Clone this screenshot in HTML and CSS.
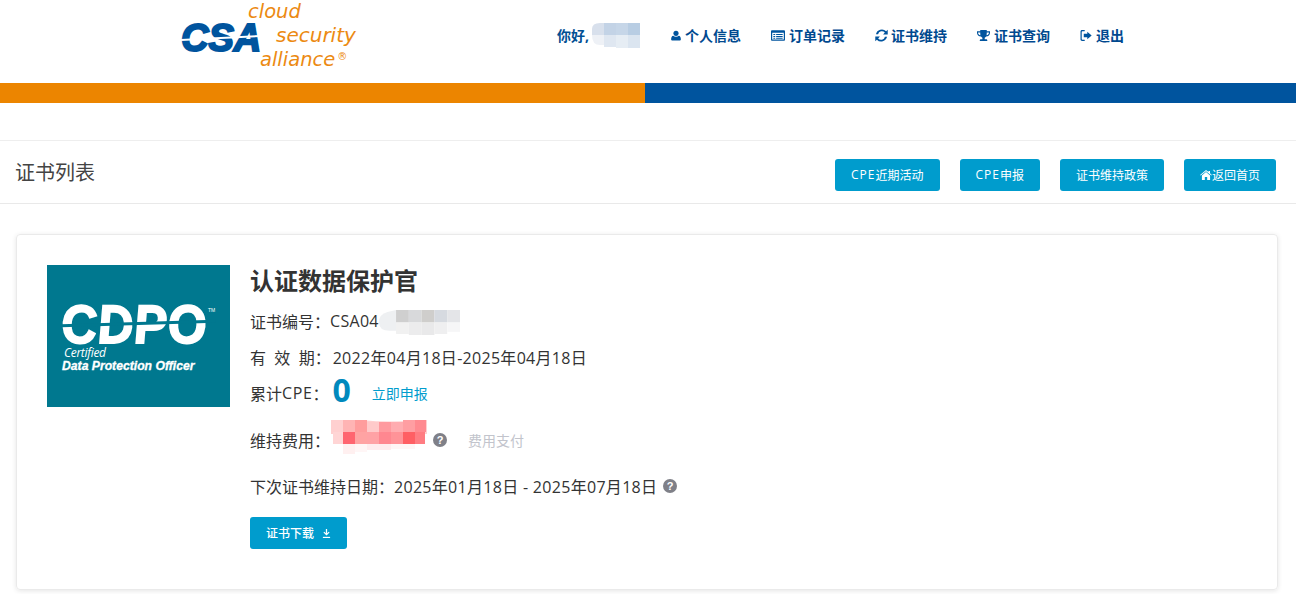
FILE: index.html
```html
<!DOCTYPE html>
<html lang="zh-CN">
<head>
<meta charset="utf-8">
<title>证书列表</title>
<link rel="stylesheet" href="styles.css">
</head>
<body>
<header class="top">
  <a class="logo">
    <span class="logo-csa">CSA<i class="logo-cut"></i></span>
    <span class="logo-w1">cloud</span>
    <span class="logo-w2">security</span>
    <span class="logo-w3">alliance<sup>®</sup></span>
  </a>
  <nav class="nav">
    <span class="hello">你好,
      <svg class="mask-name" width="48" height="25" viewBox="0 0 48 25"><path d="M0 6Q0 0 8 0h4v12H0z" fill="#d8e0ec"/><rect x="12" width="12" height="12" fill="#c3d3e6"/><rect x="24" width="12" height="12" fill="#c6d6e8"/><rect x="36" width="12" height="12" fill="#b8cde3"/><path d="M0 12h12v10H8Q0 22 0 12z" fill="#eef1f6"/><rect x="12" y="12" width="12" height="12" fill="#dfe7f1"/><rect x="24" y="12" width="12" height="13" fill="#e6edf4"/><rect x="36" y="12" width="12" height="13" fill="#dbe5f0"/></svg>
    </span>
    <a class="nav-item"><svg class="ico ico-user" viewBox="0 0 14 14"><circle cx="7" cy="4" r="3.600"/><path d="M1.600 14c-.9 0-1.400-.5-1.400-1.300 0-2.800.8-5.300 3-5.300.900.800 2.200 1.300 3.800 1.300s2.900-.5 3.800-1.300c2.200 0 3 2.500 3 5.300 0 .8-.5 1.300-1.400 1.300z"/></svg>个人信息</a>
    <a class="nav-item"><svg class="ico ico-list" viewBox="0 0 15 13"><path fill-rule="evenodd" d="M1 1h13a1 1 0 0 1 1 1v9a1 1 0 0 1-1 1H1a1 1 0 0 1-1-1V2a1 1 0 0 1 1-1zm.3 2.500v7.200h12.400V3.500zM2.500 5h2v1h-2zm3 0h7v1h-7zM2.500 7h2v1h-2zm3 0h7v1h-7zM2.500 9h2v1h-2zm3 0h7v1h-7z"/></svg>订单记录</a>
    <a class="nav-item"><svg class="ico ico-sync" viewBox="0 0 14 14"><path d="M13.700.8v5H8.700l1.900-1.900A4.200 4.200 0 0 0 3.300 5.600L1 5.600A6.500 6.500 0 0 1 12 2.500zM.3 13.200v-5h5l-1.900 1.900a4.200 4.200 0 0 0 7.300-1.700l2.300 0A6.500 6.500 0 0 1 2 11.500z"/></svg>证书维持</a>
    <a class="nav-item"><svg class="ico ico-cup" viewBox="0 0 14 14"><path fill-rule="evenodd" d="M3.500 1h7v1.500H14v1.700c0 2-1.800 3.700-4.200 3.900-.5.700-1 1.100-1.500 1.400v1.500h1.500c.8 0 1.300.6 1.300 1.300v.7H3v-.7c0-.7.500-1.300 1.300-1.300h1.500V9.500c-.5-.3-1-.7-1.500-1.400C1.800 7.900 0 6.200 0 4.200V2.500h3.500zM1.200 3.700v.5c0 1 .8 2 2.500 2.500-.2-.8-.2-1.800-.2-3zm11.600 0h-2.300c0 1.200 0 2.200-.2 3 1.700-.5 2.500-1.500 2.500-2.500z"/></svg>证书查询</a>
    <a class="nav-item"><svg class="ico ico-exit" viewBox="0 0 14 14"><path d="M5.500 2H2.800C2.200 2 2 2.300 2 2.800v8.400c0 .5.200.8.800.8h2.700v1.400H2.600C1.200 13.400.6 12.700.6 11.400V2.600C.6 1.300 1.200.6 2.600.6h2.900z"/><path d="M8.500 2.600 13.600 7l-5.100 4.400V8.900H4.400V5.100h4.100z"/></svg>退出</a>
  </nav>
</header>

<div class="stripe"><div class="stripe-orange"></div><div class="stripe-blue"></div></div>

<section class="page-head">
  <h1 class="page-title">证书列表</h1>
  <div class="head-actions">
    <a class="btn"><span class="lat">CPE</span>近期活动</a>
    <a class="btn"><span class="lat">CPE</span>申报</a>
    <a class="btn">证书维持政策</a>
    <a class="btn"><svg class="home" viewBox="0 0 13 11"><path d="M6.500 0 9.300 2.300V1h1.600v2.600L13 5.400l-.6.700-5.900-4.800L.6 6.100 0 5.400z"/><path d="M6.500 2.300 11 6v5H7.800V7.800H5.200V11H2V6z"/></svg>返回首页</a>
  </div>
</section>

<main class="card">
  <div class="cert-img">
    <div class="cert-logo">CDPO<i class="cert-cut"></i></div>
    <span class="cert-tm">TM</span>
    <div class="cert-sub">Certified</div>
    <div class="cert-name">Data Protection Officer</div>
  </div>
  <div class="cert-info">
    <h2 class="cert-title">认证数据保护官</h2>
    <div class="row row-1">证书编号：<span class="val">CSA04</span><svg class="mask-no" width="81" height="25" viewBox="0 0 76 24" preserveAspectRatio="none"><path d="M0 12Q0 4 8 2L16 0v20H10Q0 20 0 12z" fill="#eef0f2"/><rect x="16" y="0" width="12" height="12" fill="#cfcfcf"/><rect x="28" y="0" width="12" height="12" fill="#d8d9db"/><rect x="40" y="0" width="12" height="12" fill="#cfcecc"/><rect x="52" y="0" width="12" height="12" fill="#d6dae0"/><rect x="64" y="0" width="12" height="12" fill="#e4e5e8"/><rect x="16" y="12" width="12" height="11" fill="#f1f1f1"/><rect x="28" y="12" width="12" height="12" fill="#ececed"/><rect x="40" y="12" width="12" height="12" fill="#e9e9ea"/><rect x="52" y="12" width="12" height="11" fill="#efeff0"/><rect x="64" y="12" width="12" height="9" fill="#f6f6f7"/></svg></div>
    <div class="row">有&nbsp;&nbsp;效&nbsp;&nbsp;期：<span class="val val-term">2022年04月18日-2025年04月18日</span></div>
    <div class="row">累计<span class="lat-16">CPE</span>：<strong class="cpe-num">0</strong><a class="link-apply">立即申报</a></div>
    <div class="row row-fee">维持费用：<svg class="mask-fee" width="98" height="36" viewBox="0 0 98 36"><path d="M0 0h30c20 2 40 2 60 0h6v14H0z" fill="#ffd0d0"/><rect x="12" y="0" width="12" height="12" fill="#ffb4b4"/><rect x="24" y="0" width="12" height="12" fill="#ff9d9d"/><rect x="36" y="2" width="12" height="10" fill="#ffcaca"/><rect x="48" y="2" width="12" height="10" fill="#ff9a9f"/><rect x="60" y="2" width="12" height="10" fill="#ffacb0"/><rect x="72" y="0" width="12" height="12" fill="#ff9ea2"/><rect x="84" y="0" width="11" height="12" fill="#ff8a90"/><rect x="2" y="12" width="10" height="12" fill="#ffd5d5"/><rect x="12" y="12" width="12" height="12" fill="#ff6570"/><rect x="24" y="12" width="12" height="12" fill="#ffa3a3"/><rect x="36" y="12" width="12" height="12" fill="#ffa2a5"/><rect x="48" y="12" width="12" height="12" fill="#ff8790"/><rect x="60" y="12" width="12" height="12" fill="#ff9398"/><rect x="72" y="12" width="12" height="12" fill="#ff5f64"/><rect x="84" y="12" width="10" height="12" fill="#ff7c82"/><rect x="12" y="24" width="12" height="10" fill="#fff0f0"/><rect x="24" y="24" width="12" height="8" fill="#fff6f6"/><rect x="36" y="24" width="24" height="6" fill="#ffecee"/><rect x="60" y="24" width="24" height="5" fill="#fff6f6"/></svg><svg class="help" viewBox="0 0 14 14"><circle cx="7" cy="7" r="7"/><text class="help-q" x="7" y="10.800" text-anchor="middle">?</text></svg><a class="link-pay">费用支付</a></div>
    <div class="row row-next">下次证书维持日期：<span class="val">2025年01月18日&nbsp;-&nbsp;2025年07月18日</span><svg class="help help-next" viewBox="0 0 14 14"><circle cx="7" cy="7" r="7"/><text class="help-q" x="7" y="10.800" text-anchor="middle">?</text></svg></div>
    <a class="btn btn-dl">证书下载<svg class="dl" viewBox="0 0 10 10"><path d="M4.300 0h1.400v4.700L7.500 3l.9.900L5 7.200 1.600 3.900l.9-.9 1.800 1.700z"/><path d="M1 8.700h8V10H1z"/></svg></a>
  </div>
</main>
</body>
</html>
```
FILE: styles.css
```css
* { box-sizing: border-box; }
html, body { margin: 0; padding: 0; }
body {
  height: 594px;
  overflow: hidden;
  background: #fff;
  color: #333;
  font-family: "Open Sans", "Noto Sans CJK SC", sans-serif;
  font-size: 16px;
}
a { text-decoration: none; }

/* header */
.top { display: flex; align-items: center; height: 83px; padding-left: 180px; }
.logo { position: relative; display: block; width: 180px; height: 72px; flex: none; }
.logo-csa {
  position: absolute; left: 1px; top: 16px; height: 32px;
  font: italic 900 38px/32px "Liberation Sans", sans-serif;
  -webkit-text-stroke: 2px #00549e;
  color: #00549e; white-space: nowrap;
}
.logo-cut { position: absolute; left: 0; right: 0; top: 15px; height: 2px; background: #fff; transform: rotate(-3deg); }
.logo-w1, .logo-w2, .logo-w3 {
  position: absolute; color: #ec8a12;
  font: italic 400 20px/1 "DejaVu Sans", sans-serif;
}
.logo-w1 { left: 68px; top: -4px; font-size: 19.500px; }
.logo-w2 { left: 96px; top: 19px; }
.logo-w3 { left: 80px; top: 44px; font-size: 19.500px; }
.logo-w3 sup { font-size: 10px; line-height: 0; font-style: normal; vertical-align: 6px; margin-left: 2px; }

.nav { display: flex; align-items: center; margin: 0 0 13px 197px; color: #004f93; font-size: 14px; font-weight: 700; gap: 30px; }
.hello { display: flex; align-items: center; width: 84px; }
.mask-name { flex: none; margin-left: 3px; }
.nav-item { display: flex; align-items: center; color: #00498f; white-space: nowrap; }
.ico { height: 13px; margin-right: 4px; fill: #00549e; flex: none; }
.ico-user { width: 10px; }
.ico-list { width: 14px; }
.ico-sync { width: 13px; margin-right: 3px; }
.ico-cup { width: 13px; }
.ico-exit { width: 12px; }

/* stripe */
.stripe { display: flex; height: 20px; }
.stripe-orange { width: 645px; background: #ec8500; }
.stripe-blue { flex: 1; background: #00549e; }

/* page head */
.page-head {
  display: flex; align-items: center; justify-content: space-between;
  height: 64px; margin-top: 37px; padding: 0 20px 0 15px;
  border-top: 1px solid #eeeeee; border-bottom: 1px solid #e9e9e9;
}
.page-title { margin: -2px 0 0; font-size: 20px; font-weight: 400; color: #444; }
.head-actions { display: flex; gap: 20px; margin-top: 5px; }
.btn {
  display: inline-flex; align-items: center; justify-content: center;
  height: 32px; padding: 0 16px; border-radius: 3px;
  background: #009ccd; color: #fff; font-size: 12px; white-space: nowrap;
}
.lat { letter-spacing: 1px; }
.lat-16 { letter-spacing: .6px; }
.home { width: 12px; height: 10px; fill: #fff; }

/* card */
.card {
  display: flex; margin: 30px 18px 0 16px; height: 356px;
  padding: 30px 30px 0 30px;
  border: 1px solid #eaeaea; border-radius: 4px;
  box-shadow: 0 1px 5px rgba(0, 0, 0, .1);
}
.cert-img { position: relative; width: 183px; height: 142px; flex: none; background: #00788f; color: #fff; }
.cert-logo {
  position: absolute; left: 14px; top: 37px; width: 170px; height: 44px;
  font: italic 900 54px/44px "Liberation Sans", sans-serif;
  -webkit-text-stroke: 2px #fff; white-space: nowrap; letter-spacing: 1px;
  transform: scaleX(.91) skewX(6deg); transform-origin: left center;
}
.cert-cut { position: absolute; left: 0; width: 170px; top: 20px; height: 3px; background: #00788f; transform: rotate(-1.500deg); }
.cert-tm { position: absolute; left: 161px; top: 43px; font: 400 5px/1 "Liberation Sans", sans-serif; }
.cert-sub { position: absolute; left: 17px; top: 82px; font: italic 400 12px/1 "Open Sans", sans-serif; letter-spacing: -.3px; }
.cert-name { position: absolute; left: 15px; top: 95px; font: italic 700 12.200px/1 "Liberation Sans", sans-serif; white-space: nowrap; -webkit-text-stroke: .3px #fff; }

.cert-info { margin-left: 20px; display: flex; flex-direction: column; align-items: flex-start; }
.cert-title { margin: -1px 0 5px; height: 34px; font-size: 24px; line-height: 34px; font-weight: 700; color: #333; }
.row { display: flex; align-items: center; height: 36px; white-space: pre; }
.val { letter-spacing: .3px; }
.val-term { margin-left: 2px; }
.row-fee { margin-top: 11px; }
.row-next { margin-top: 10px; }
.mask-no { margin-top: 2px; }
.cpe-num { margin: -6px 21px 0 4px; color: #0089bd; font-size: 32px; font-weight: 700; line-height: 1; }
.link-apply { color: #009ccd; font-size: 14px; }
.mask-fee { margin: -4px 0 0 1px; flex: none; }
.help { width: 14px; height: 14px; fill: #7f8088; flex: none; margin-left: 4px; }
.help-next { margin-left: 6px; }
.help-q { fill: #fff; font: 700 11px "Liberation Sans", sans-serif; }
.link-pay { margin-left: 21px; color: #c2c4cc; font-size: 14px; }
.btn-dl { margin-top: 13px; width: 97px; padding: 0; font-weight: 500; }
.dl { width: 9px; height: 9px; margin-left: 8px; fill: #fff; }
```
